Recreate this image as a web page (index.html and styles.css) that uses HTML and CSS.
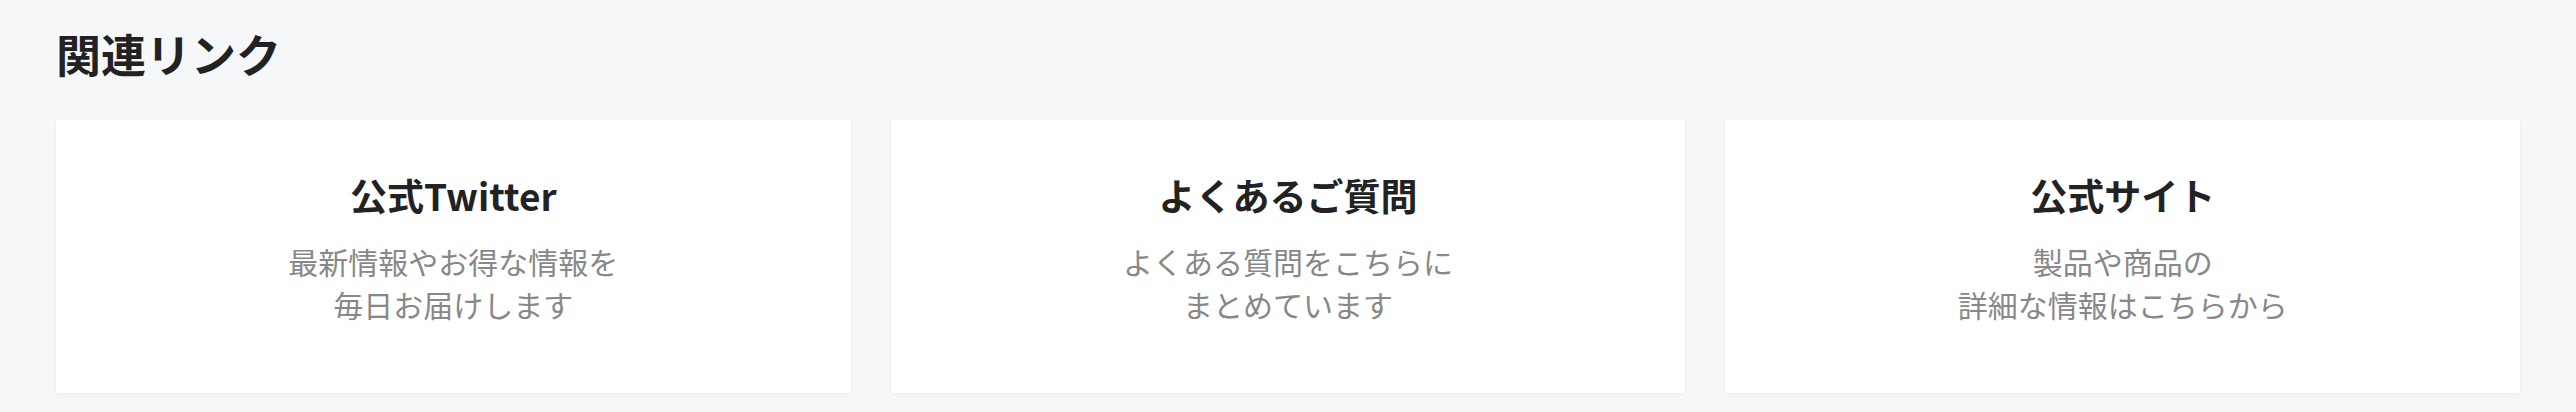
FILE: index.html
```html
<!DOCTYPE html>
<html lang="ja">
<head>
<meta charset="utf-8">
<title>関連リンク</title>
<link rel="stylesheet" href="styles.css">
</head>
<body>
<section class="related">
  <h2 class="related-title">関連リンク</h2>
  <div class="cards">
    <a class="card" href="#">
      <h3 class="card-title">公式Twitter</h3>
      <p class="card-desc">最新情報やお得な情報を<br>毎日お届けします</p>
    </a>
    <a class="card" href="#">
      <h3 class="card-title">よくあるご質問</h3>
      <p class="card-desc">よくある質問をこちらに<br>まとめています</p>
    </a>
    <a class="card" href="#">
      <h3 class="card-title">公式サイト</h3>
      <p class="card-desc">製品や商品の<br>詳細な情報はこちらから</p>
    </a>
  </div>
</section>
</body>
</html>
```

FILE: styles.css
```css
html, body {
  margin: 0;
  padding: 0;
  background: #f6f7f9;
}
body {
  font-family: "Noto Sans CJK JP", "Noto Sans", sans-serif;
  color: #222;
}
.related {
  padding: 30px 56px 19px;
}
.related-title {
  margin: 0;
  font-size: 45px;
  line-height: 48px;
  font-weight: 700;
  color: #222;
  letter-spacing: 0;
}
.cards {
  margin-top: 42px;
  display: grid;
  grid-template-columns: repeat(3, 1fr);
  gap: 40px;
}
.card {
  display: flex;
  flex-direction: column;
  align-items: center;
  height: 273px;
  box-sizing: border-box;
  padding-top: 50px;
  background: #fff;
  border-radius: 2px;
  box-shadow: 0 1px 4px rgba(0, 0, 0, 0.06);
  text-decoration: none;
  text-align: center;
}
.card-title {
  margin: 0;
  font-size: 37px;
  line-height: 50px;
  font-weight: 700;
  color: #222;
}
.card-desc {
  margin: 20px 0 0;
  font-size: 30px;
  line-height: 43px;
  font-weight: 400;
  color: #888;
}
```
